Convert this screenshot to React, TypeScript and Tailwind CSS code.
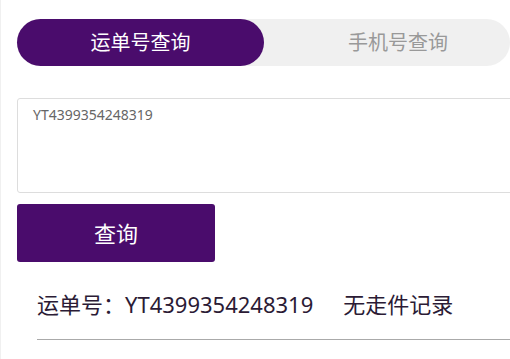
import React, { useState } from "react";

export default function App() {
  const [tab, setTab] = useState(0);
  const [value, setValue] = useState("YT4399354248319");

  const font = { fontFamily: '"Noto Sans", "Noto Sans CJK SC", sans-serif' };

  return (
    <div
      className="w-[510px] h-[359px] overflow-hidden bg-white border-l border-[#f0f0f0]"
      style={font}
    >
      <div className="pl-[16px] pt-[19px]">
        <div className="flex w-[493px] h-[47px] rounded-full bg-[#f0f0f0]">
          <button
            onClick={() => setTab(0)}
            className={
              tab === 0
                ? "w-[247px] h-full rounded-full bg-[#4a0c6c] text-white text-[20px] leading-none"
                : "w-[247px] h-full rounded-full text-[#999] text-[20px] leading-none"
            }
          >
            运单号查询
          </button>
          <button
            onClick={() => setTab(1)}
            className={
              tab === 1
                ? "flex-1 h-full rounded-full bg-[#4a0c6c] text-white text-[20px] leading-none"
                : "flex-1 h-full pl-[22px] text-[#999] text-[20px] leading-none"
            }
          >
            手机号查询
          </button>
        </div>

        <textarea
          value={value}
          onChange={(e) => setValue(e.target.value)}
          className="mt-[32px] block w-[510px] h-[95px] resize-none rounded-[3px] border border-[#ddd] px-[15px] pt-[6px] text-[14px] leading-[20px] text-[#666] outline-none"
        />

        <button className="mt-[11px] w-[198px] h-[58px] rounded-[3px] bg-[#4a0c6c] text-white text-[22px] leading-none">
          查询
        </button>

        <div className="ml-[20px] mt-[27px] flex items-center h-[30px] text-[22px] leading-none text-[#2b1b35]">
          <span>运单号：{value}</span>
          <span className="ml-[30px]">无走件记录</span>
        </div>

        <div className="ml-[20px] mt-[20px] h-px bg-[#aaa]" />
      </div>
    </div>
  );
}
